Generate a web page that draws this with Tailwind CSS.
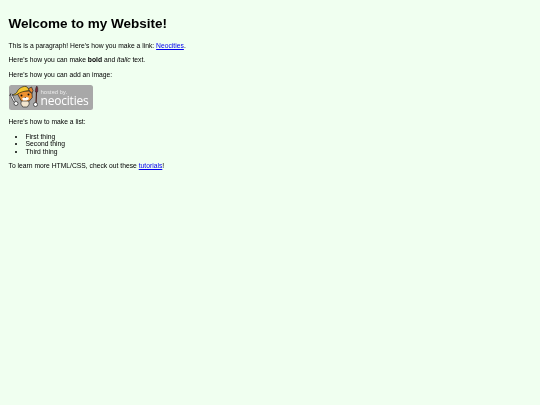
<!DOCTYPE html>
<html lang="en">
  <head>
    <meta charset="UTF-8" />
    <title>My Website</title>
    <script src="https://cdn.jsdelivr.net/npm/@tailwindcss/browser@4"></script>
  </head>
  <body class="min-h-screen bg-[#f0fff0] text-black font-['Liberation_Sans',Arial,sans-serif] text-[6.75px] leading-[7.75px] px-[8.5px] pt-[16.25px]">
    <div class="blur-[0.25px]">
      <h1 class="text-[13.5px] leading-[15.5px] font-bold mb-[10px]">Welcome to my Website!</h1>

      <p class="mb-[6.75px]">This is a paragraph! Here's how you make a link: <a href="#" class="text-[#0000ee] underline">Neocities</a>.</p>
      <p class="mb-[6.75px]">Here's how you can make <b>bold</b> and <i>italic</i> text.</p>
      <p class="mb-[6.75px]">Here's how you can add an image:</p>

      <!-- badge -->
      <div class="flex w-[84.5px] h-[25px] rounded-[2.5px] bg-[#a8a8a8] mb-[8px] overflow-hidden">
        <svg viewBox="0 0 32 25" class="w-[32px] h-[25px] shrink-0">
          <!-- wrench -->
          <path d="M2.500 10.500l3 6" stroke="#222" stroke-width="2.200" fill="none" />
          <path d="M2.500 10.500l3 6" stroke="#eee" stroke-width="1.200" fill="none" />
          <path d="M.8 11l1-2.500M3.500 9l.8 1.800" stroke="#222" stroke-width=".9" fill="none" />
          <circle cx="7" cy="18.500" r="2" fill="#fff" stroke="#222" stroke-width=".7" />
          <!-- body -->
          <path d="M12.500 15h7l.8 4-2 3h-4.500l-2-3z" fill="#f3e6cf" stroke="#333" stroke-width=".7" />
          <!-- ear and head -->
          <path d="M19 4l3.500-2 1.500 3.500-1 3z" fill="#e8862a" stroke="#222" stroke-width=".7" />
          <path d="M8.500 9l4-3h7l3.500 2.500.3 4-3 3.500h-8z" fill="#ee9130" stroke="#222" stroke-width=".7" />
          <!-- helmet -->
          <path d="M4.500 9.500c2-1 3-1.500 3.500-2.500 1-3 5-6 9-5.500 1.500.5 2.500 2 3 4-4 .5-9 1.500-12 4-1.500.7-3 .7-3.500 0z" fill="#f4c52f" stroke="#2c2a14" stroke-width=".7" />
          <!-- muzzle and eyes -->
          <path d="M13 13.500l3-1.500 3.500.5 .3 1.800-2.300 1.200h-3.500z" fill="#fff" />
          <circle cx="12.500" cy="10.500" r="1" fill="#111" />
          <circle cx="19.500" cy="9.500" r="1" fill="#111" />
          <path d="M15.200 12l2 0-1 1z" fill="#111" />
          <!-- paintbrush -->
          <path d="M27.500 7l-.5 12" stroke="#4a2016" stroke-width="1.200" />
          <path d="M27.800 1c1.200 1.500 1.200 4 .7 6h-2c-.3-2 .2-4.500 1.300-6z" fill="#7c2633" stroke="#222" stroke-width=".5" />
          <circle cx="26.500" cy="19.500" r="2" fill="#fff" stroke="#222" stroke-width=".7" />
        </svg>
        <div class="flex flex-col text-white font-['Open_Sans',Arial,sans-serif] pt-[4px]">
          <span class="text-[5.500px] leading-[6px] text-[#eeeeee]">hosted by.</span>
          <span class="text-[12px] leading-[12px] tracking-[-0.2px]">neocities</span>
        </div>
      </div>

      <p class="mb-[6.5px]">Here's how to make a list:</p>
      <ul class="list-disc pl-[17px] mb-[6.2px]">
        <li>First thing</li>
        <li>Second thing</li>
        <li>Third thing</li>
      </ul>
      <p>To learn more HTML/CSS, check out these <a href="#" class="text-[#0000ee] underline">tutorials</a>!</p>
    </div>
  </body>
</html>
